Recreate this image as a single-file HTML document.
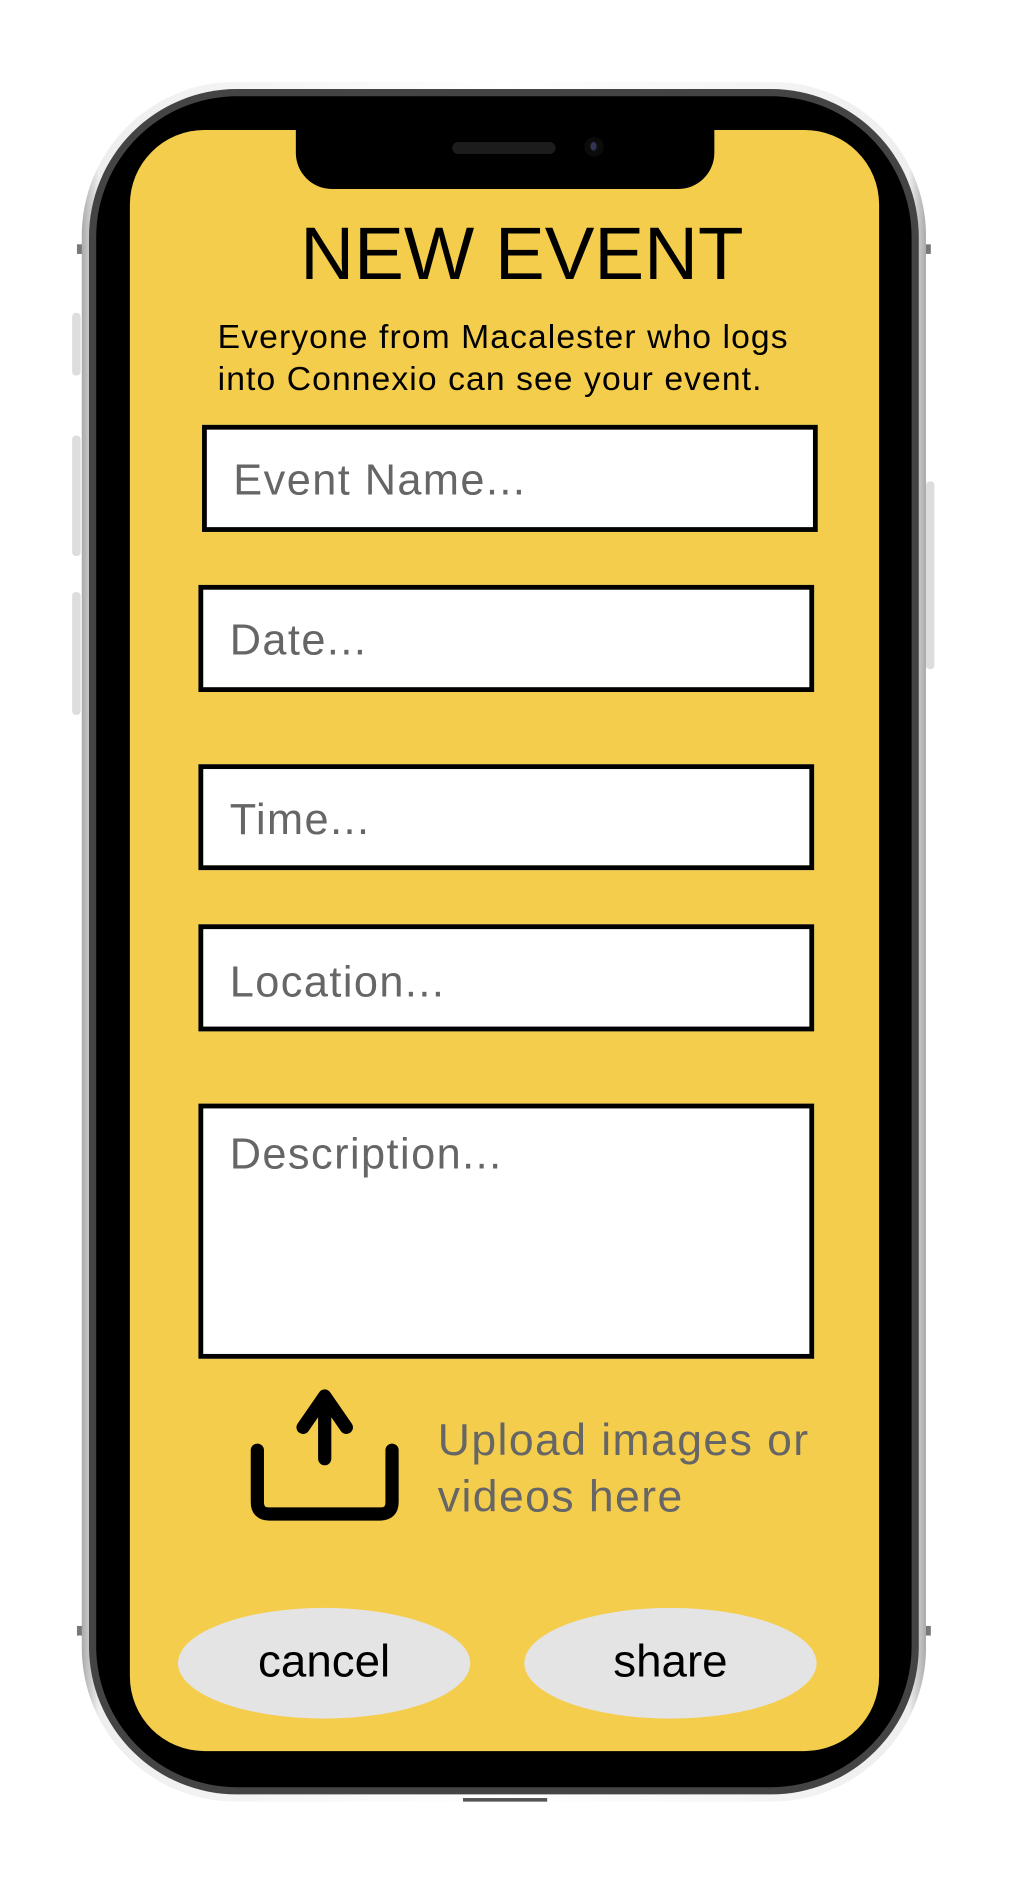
<!DOCTYPE html>
<html><head><meta charset="utf-8"><style>
html,body{margin:0;padding:0;background:#fff;width:1009px;height:1890px;overflow:hidden}
#s{position:absolute;left:0;top:0;width:839px;height:1571px;transform:scale(1.2026,1.2035);transform-origin:0 0;font-family:"Liberation Sans",sans-serif}
.a{position:absolute}
.outer{left:68px;top:68px;width:702px;height:1429px;border-radius:128px;background:linear-gradient(90deg,#aaa,#eee 2%,#fff 50%,#eee 98%,#aaa);}
.bez1{left:74px;top:74px;width:690px;height:1417px;border-radius:123px;background:#444}
.bez2{left:80px;top:80px;width:678px;height:1405px;border-radius:117px;background:#000}
.scr{left:108px;top:108px;width:623px;height:1347px;border-radius:62px;background:#f5cd4c;overflow:hidden}
.notch{left:246px;top:100px;width:348px;height:57px;background:#000;border-radius:0 0 30px 30px}
.btn{background:#ddd;border-radius:3px}
.inp{background:#fff;border:4px solid #000;box-sizing:border-box;color:#666;font-size:36px;padding-left:22px;letter-spacing:1.2px}
.ell{background:#e4e4e4;border-radius:50%;width:243px;height:92px;top:1336px;text-align:center;line-height:90px;font-size:38px;color:#000}
</style></head><body><div id="s">
<div class="a btn" style="left:60px;top:260px;width:7px;height:52px"></div>
<div class="a btn" style="left:60px;top:362px;width:7px;height:100px"></div>
<div class="a btn" style="left:60px;top:492px;width:7px;height:102px"></div>
<div class="a btn" style="left:770px;top:400px;width:7px;height:156px"></div>
<div class="a" style="left:64px;top:203px;width:8px;height:8px;background:#777"></div>
<div class="a" style="left:766px;top:203px;width:8px;height:8px;background:#777"></div>
<div class="a" style="left:64px;top:1351px;width:8px;height:8px;background:#777"></div>
<div class="a" style="left:766px;top:1351px;width:8px;height:8px;background:#777"></div>
<div class="a outer"></div>
<div class="a bez1"></div>
<div class="a bez2"></div>
<div class="a scr"></div>
<div class="a notch"></div>
<div class="a" style="left:376px;top:118px;width:86px;height:10px;border-radius:5px;background:#1c1c1c"></div>
<div class="a" style="left:486px;top:114px;width:16px;height:16px;border-radius:50%;background:#111;box-shadow:inset 0 0 0 4px #0b0b0b"><div class="a" style="left:5px;top:4px;width:5px;height:7px;border-radius:50%;background:#335"></div></div>
<div class="a" style="left:108px;top:177px;width:652px;text-align:center;font-size:62px;line-height:70px;color:#000">NEW EVENT</div>
<div class="a" style="left:181px;top:262px;font-size:28px;line-height:35px;color:#000;letter-spacing:0.9px">Everyone from Macalester who logs<br>into Connexio can see your event.</div>
<div class="a inp" style="left:168px;top:353px;width:512px;height:89px;line-height:84px">Event Name...</div>
<div class="a inp" style="left:165px;top:486px;width:512px;height:89px;line-height:84px">Date...</div>
<div class="a inp" style="left:165px;top:635px;width:512px;height:88px;line-height:84px">Time...</div>
<div class="a inp" style="left:165px;top:768px;width:512px;height:89px;line-height:88px">Location...</div>
<div class="a inp" style="left:165px;top:917px;width:512px;height:212px;line-height:76px">Description...</div>
<svg class="a" style="left:200px;top:1150px" width="140" height="120" viewBox="0 0 140 120">
<path d="M70 10 V62 M52 36 L70 10 L88 36" fill="none" stroke="#000" stroke-width="11" stroke-linecap="round" stroke-linejoin="round"/>
<path d="M14 55 V98 Q14 108 24 108 H116 Q126 108 126 98 V55" fill="none" stroke="#000" stroke-width="11" stroke-linecap="round"/>
</svg>
<div class="a" style="left:364px;top:1173px;font-size:37px;line-height:47px;color:#666;letter-spacing:1.2px">Upload images or<br>videos here</div>
<div class="a ell" style="left:148px">cancel</div>
<div class="a ell" style="left:436px">share</div>
<div class="a" style="left:385px;top:1494px;width:70px;height:3px;background:#555"></div>
</div></body></html>
